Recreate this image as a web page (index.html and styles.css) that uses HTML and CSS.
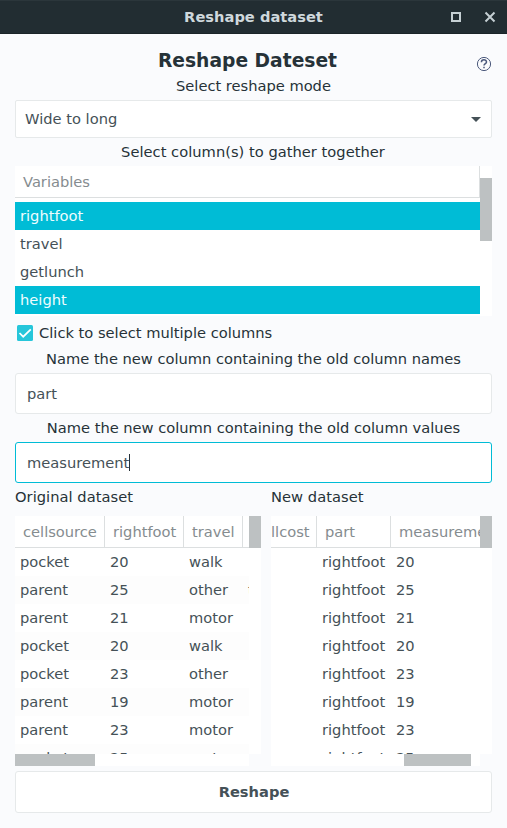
FILE: index.html
```html
<!DOCTYPE html>
<html lang="en">
<head>
<meta charset="utf-8">
<title>Reshape dataset</title>
<link rel="stylesheet" href="styles.css">
</head>
<body>
<header class="titlebar">
  <span class="window-title">Reshape dataset</span>
  <svg class="window-buttons" width="46" height="12" viewBox="0 0 46 12" fill="none" stroke="#c5cfd3" stroke-width="2"><path d="M2 2h8v8H2z"/><path d="M35.5 1.5l9 9M44.5 1.5l-9 9"/></svg>
</header>
<main class="dialog">
  <div class="heading-row">
    <h1>Reshape Dateset</h1>
    <svg class="help" width="16" height="16" viewBox="0 0 16 16" fill="none" stroke="#4c5a7d"><circle cx="8" cy="8" r="6.6"/><path stroke-width="1.5" d="M5.4 6.3C5.4 3.1 10.5 3.1 10.5 6C10.5 7.6 8 7.7 8 9.6M8 10.7v1.6"/></svg>
  </div>
  <p class="label">Select reshape mode</p>
  <div class="select"><span>Wide to long</span><i class="arrow"></i></div>
  <p class="label gather">Select column(s) to gather together</p>
  <section class="variables">
    <div class="list">
      <div class="list-head">Variables</div>
      <div class="item selected">rightfoot</div>
      <div class="item">travel</div>
      <div class="item">getlunch</div>
      <div class="item selected">height</div>
    </div>
    <div class="vtrack"><i class="vthumb"></i></div>
  </section>
  <div class="check-row">
    <svg width="16" height="16" viewBox="0 0 16 16"><rect width="16" height="16" rx="1.5" fill="#26c6da"/><path d="M2.5 8l3.7 3.7L13.8 4.3" fill="none" stroke="#fff" stroke-width="1.7"/></svg>
    <span>Click to select multiple columns</span>
  </div>
  <p class="label names">Name the new column containing the old column names</p>
  <div class="entry">part</div>
  <p class="label values">Name the new column containing the old column values</p>
  <div class="entry focused">measurement<i class="caret"></i></div>
  <div class="datasets">
    <section class="dataset">
      <h2>Original dataset</h2>
      <div class="frame">
        <div class="grid original">
          <div class="row head"><span>cellsource</span><span>rightfoot</span><span>travel</span><span></span></div>
          <div class="row"><span>pocket</span><span>20</span><span>walk</span><span></span></div>
          <div class="row"><span>parent</span><span>25</span><span>other</span><span class="cut">t</span></div>
          <div class="row"><span>parent</span><span>21</span><span>motor</span><span></span></div>
          <div class="row"><span>pocket</span><span>20</span><span>walk</span><span></span></div>
          <div class="row"><span>pocket</span><span>23</span><span>other</span><span></span></div>
          <div class="row"><span>parent</span><span>19</span><span>motor</span><span></span></div>
          <div class="row"><span>parent</span><span>23</span><span>motor</span><span></span></div>
          <div class="row"><span>pocket</span><span>25</span><span>motor</span><span></span></div>
        </div>
        <div class="vtrack"><i class="vthumb"></i></div>
        <div class="htrack"><i class="hthumb"></i></div>
      </div>
    </section>
    <section class="dataset">
      <h2>New dataset</h2>
      <div class="frame">
        <div class="grid new">
          <div class="row head"><span>llcost</span><span>part</span><span>measurement</span></div>
          <div class="row"><span></span><span>rightfoot</span><span>20</span></div>
          <div class="row"><span></span><span>rightfoot</span><span>25</span></div>
          <div class="row"><span></span><span>rightfoot</span><span>21</span></div>
          <div class="row"><span></span><span>rightfoot</span><span>20</span></div>
          <div class="row"><span></span><span>rightfoot</span><span>23</span></div>
          <div class="row"><span></span><span>rightfoot</span><span>19</span></div>
          <div class="row"><span></span><span>rightfoot</span><span>23</span></div>
          <div class="row"><span></span><span>rightfoot</span><span>25</span></div>
        </div>
        <div class="vtrack"><i class="vthumb"></i></div>
        <div class="htrack"><i class="hthumb right"></i></div>
      </div>
    </section>
  </div>
  <button class="reshape">Reshape</button>
</main>
</body>
</html>
```
FILE: styles.css
```css
* { box-sizing: border-box; }
body {
  margin: 0;
  height: 828px;
  overflow: hidden;
  background: #fafbfd;
  color: #263238;
  font: 14.667px/20px "DejaVu Sans", sans-serif;
}
i { display: block; }
.titlebar {
  display: grid;
  grid-template-columns: 1fr auto 1fr;
  align-items: center;
  height: 34px;
  background: #222d32;
  border-top: 1px solid #2b363b;
  border-bottom: 1px solid #1b2428;
}
.window-title { grid-column: 2; color: #cfd8dc; font-weight: bold; }
.window-buttons { justify-self: end; margin-right: 11px; }
.dialog { padding: 14px 15px 0; }
.heading-row {
  display: grid;
  grid-template-columns: 16px 1fr 16px;
  height: 28px;
}
h1 { grid-column: 2; margin: 0; font-size: 18.7px; line-height: 26px; text-align: center; padding-right: 12px; }
.help { margin-top: 8px; }
.label { margin: 0; height: 24px; line-height: 20px; text-align: center; letter-spacing: -0.01px; }
.select {
  display: flex;
  align-items: center;
  justify-content: space-between;
  height: 38px;
  padding: 0 10px 0 9px;
  background: #fff;
  border: 1px solid #e6e9ea;
  border-radius: 2px;
  color: #455157;
}
.arrow { border: 5px solid transparent; border-top-color: #455157; border-bottom: 0; }
.gather { height: 28px; padding-top: 4px; padding-right: 1px; letter-spacing: 0.02px; }
.variables { display: flex; height: 150px; background: #fff; }
.list { flex: 1; color: #455157; }
.list-head {
  height: 32px;
  margin-bottom: 4px;
  padding-left: 8px;
  line-height: 32px;
  border-right: 1px solid #dcdfe0;
  border-bottom: 1px solid #dcdfe0;
  color: #858c8f;
}
.item { height: 28px; padding-left: 5px; line-height: 28px; }
.selected { background: #00bcd6; color: #eefcff; }
.vtrack { width: 12px; }
.variables .vthumb { height: 63px; margin-top: 12px; background: #bdc1c2; }
.check-row { display: flex; align-items: center; gap: 6px; height: 33px; padding: 0 2px; }
.names { height: 24px; }
.entry {
  display: flex;
  align-items: center;
  height: 41px;
  padding-left: 11px;
  background: #fff;
  border: 1px solid #e6e9ea;
  border-radius: 3px;
  color: #455157;
}
.values { height: 28px; padding-top: 4px; }
.focused { border-color: #00bcd6; }
.caret { width: 1px; height: 17px; background: #263238; }
.datasets { display: grid; grid-template-columns: 246px 221px; gap: 10px; height: 288px; }
.dataset { padding-top: 4px; }
h2 { margin: 0 0 9px; font-size: inherit; font-weight: normal; line-height: 20px; letter-spacing: 0.04px; }
.frame { display: grid; grid-template: 238px 12px / 1fr 12px; }
.frame .vtrack, .htrack, .grid { background: #fff; }
.frame .vthumb { height: 32px; background: #bdc1c2; }
.hthumb { width: 80px; height: 12px; background: #bdc1c2; }
.hthumb.right { width: 67px; margin-left: 133px; }
.grid { overflow: hidden; color: #455157; }
.row { display: grid; height: 28px; line-height: 28px; white-space: nowrap; }
.original .row { grid-template-columns: 90px 79px 59px 1fr; }
.new .row { grid-template-columns: 46px 74px 120px; }
.row span { padding-left: 5px; overflow: hidden; }
.original .row:nth-child(odd) { background: #fdfdfd; }
.row.head, .original .row.head { height: 32px; line-height: 32px; background: #fff; border-bottom: 1px solid #dcdfe0; color: #858c8f; }
.head span { padding-left: 8px; border-right: 1px solid #dcdfe0; }
.head span:last-child { border-right: 0; }
.new .head span:first-child { padding-left: 0; }
.reshape {
  display: block;
  width: 100%;
  height: 42px;
  background: #fff;
  border: 1px solid #e6e9ea;
  border-radius: 3px;
  color: #455157;
  font: inherit;
  font-weight: bold;
  padding: 0 0 0 1px;
}
```
